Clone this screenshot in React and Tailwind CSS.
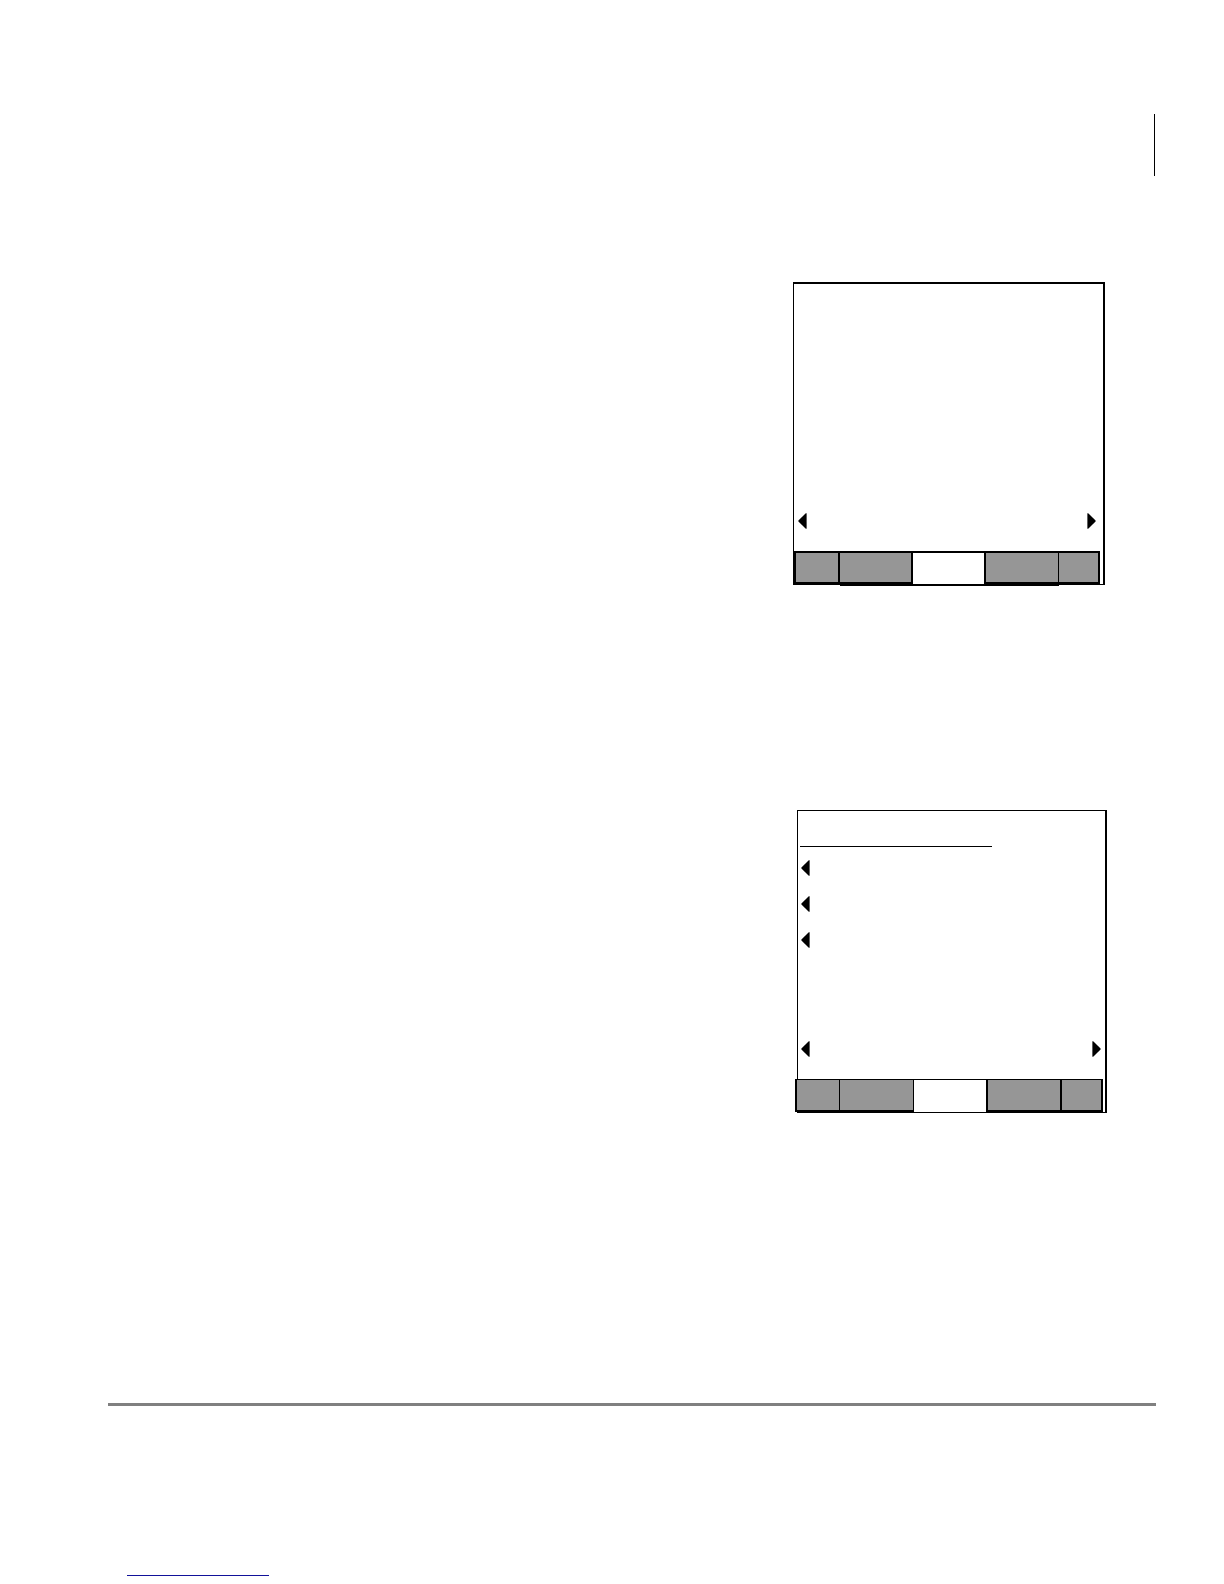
import React from 'react';

const ArrowLeft = () => (
  <svg viewBox="0 0 9 16" className="block w-[9px] h-4" aria-hidden="true">
    <path d="M8.6 0.2 V15.8 H7.8 L0.4 8.6 V7.4 L7.8 0.2 Z" fill="#000" />
  </svg>
);

const ArrowRight = () => (
  <svg viewBox="0 0 9 16" className="block w-[9px] h-4" aria-hidden="true">
    <path d="M0.4 0.2 V15.8 H1.2 L8.6 8.6 V7.4 L1.2 0.2 Z" fill="#000" />
  </svg>
);

const ArrowButton = ({ label, right }) => (
  <button type="button" aria-label={label} className="block">
    {right ? <ArrowRight /> : <ArrowLeft />}
  </button>
);

const PagerRow = () => (
  <div className="flex justify-between mt-auto pb-[22px]">
    <ArrowButton label="Previous" />
    <ArrowButton label="Next" right />
  </div>
);

const TabBar = ({ tabs, className }) => (
  <nav className={`flex h-[33px] shrink-0 ${className}`}>
    {tabs.map((tab, i) => (
      <button
        key={i}
        type="button"
        aria-label={`Tab ${i + 1}`}
        className={`shrink-0 border-black ${tab}`}
      />
    ))}
  </nav>
);

const mainTabs = [
  'w-[46px] border-l-2 border-r-2 border-b-2 bg-[#969696]',
  'w-[73px] border-r-2 border-b-2 bg-[#969696] shadow-[0_2px_0_#000]',
  'w-[73px] border-r-2 bg-white shadow-[0_2px_0_#000]',
  'w-[73px] border-r border-b-2 bg-[#969696] shadow-[0_2px_0_#000]',
  'w-[41px] border-r-2 border-b-2 bg-[#969696]',
];

const optionTabs = [
  'w-[45px] border-l-2 border-r border-b-2 bg-[#969696]',
  'w-[74px] border-r border-b-2 bg-[#969696]',
  'w-[74px] border-r-2 bg-white',
  'w-[74px] border-r-2 border-b-2 bg-[#969696]',
  'w-[41px] border-r-2 border-b-2 bg-[#969696]',
];

const MainScreen = () => (
  <section className="flex flex-col w-[312px] h-[303px] mr-[51px] border-l border-t-2 border-r-2 border-b border-black">
    <div className="flex flex-col flex-1 pl-1 pr-[7px]">
      <PagerRow />
    </div>
    <TabBar tabs={mainTabs} className="w-[306px] [&>button]:border-t-2" />
  </section>
);

const OptionScreen = () => (
  <section className="flex flex-col w-[310px] h-[303px] mr-[49px] border-l border-t border-r-2 border-b border-black">
    <div className="w-48 h-9 ml-0.5 border-b border-black" />
    <div className="flex flex-col flex-1 pl-[3px] pr-1 pt-[13px]">
      <div className="flex flex-col items-start gap-5">
        <ArrowButton label="Option 1" />
        <ArrowButton label="Option 2" />
        <ArrowButton label="Option 3" />
      </div>
      <PagerRow />
    </div>
    <TabBar tabs={optionTabs} className="w-[308px] -ml-[3px] [&>button]:border-t" />
  </section>
);

const App = () => {
  return (
    <div className="min-h-screen bg-white pt-[114px] pb-2 pl-[108px] pr-[68px] font-['Liberation_Sans',sans-serif]">
      <header className="h-[62px] mr-px border-r border-black" />

      <main className="flex flex-col items-end gap-[225px] pt-[106px] pb-[290px]">
        <MainScreen />
        <OptionScreen />
      </main>

      <footer className="border-t-[3px] border-[#808080] pt-[169px]">
        <a href="#" aria-label="Website" className="block w-[142px] h-px ml-[19px] bg-[#12129a]" />
      </footer>
    </div>
  );
};

export default App;
